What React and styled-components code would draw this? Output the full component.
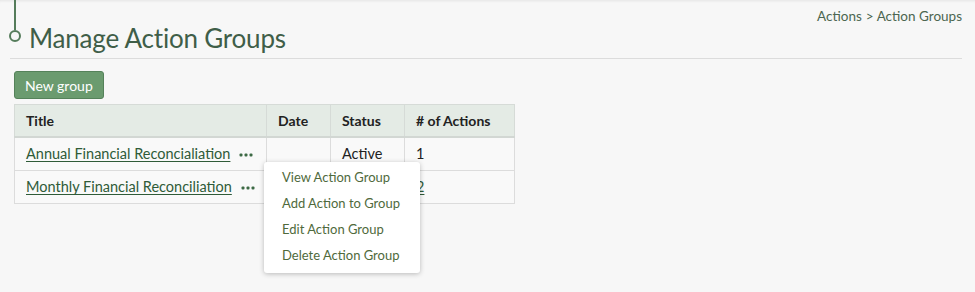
import React from "react";
import styled, { createGlobalStyle } from "styled-components";

const GlobalStyle = createGlobalStyle`
  html, body {
    margin: 0;
    padding: 0;
    background: #f7f7f7;
    font-family: Lato, "Open Sans", sans-serif;
  }
`;

const Page = styled.div`
  width: 975px;
  height: 292px;
  box-sizing: border-box;
  padding: 0 13px 0 14px;
  box-shadow: inset 0 3px 3px -2px rgba(0, 0, 0, 0.08);
`;

const Header = styled.div`
  display: flex;
  justify-content: space-between;
  align-items: flex-start;
  border-bottom: 1px solid #dcdcdc;
  margin-left: -4px;
  height: 59px;
  box-sizing: border-box;
`;

const TitleWrap = styled.div`
  display: flex;
  align-items: flex-start;
`;

const Marker = styled.div`
  display: flex;
  flex-direction: column;
  align-items: center;
  margin-left: -1px;
  width: 12px;
`;

const MarkerLine = styled.div`
  width: 2px;
  height: 30px;
  background: #557c5b;
`;

const MarkerDot = styled.div`
  width: 12px;
  height: 12px;
  box-sizing: border-box;
  border: 2px solid #557c5b;
  border-radius: 50%;
`;

const Title = styled.h1`
  margin: 22px 0 0 8px;
  font-size: 26px;
  font-weight: 400;
  color: #3f5e48;
  line-height: 32px;
  letter-spacing: -0.2px;
`;

const Breadcrumb = styled.div`
  margin-top: 8px;
  font-size: 13.5px;
  color: #4c6650;
  display: flex;
  gap: 4px;
`;

const NewButton = styled.button`
  margin-top: 12px;
  display: block;
  height: 28px;
  padding: 0 10px;
  background: #6b9b6f;
  border: 1px solid #55825a;
  border-radius: 3px;
  color: #fff;
  font-family: inherit;
  font-size: 14px;
`;

const TableWrap = styled.div`
  position: relative;
  margin-top: 5px;
  width: 500px;
`;

const Table = styled.table`
  width: 500px;
  border-collapse: collapse;
  font-size: 14.5px;
  color: #222;
  table-layout: fixed;
`;

const Th = styled.th`
  text-align: left;
  font-weight: 700;
  font-size: 14px;
  background: #e4ebe5;
  border: 1px solid #d6dbd7;
  border-bottom: 2px solid #d2d7d3;
  height: 32px;
  padding: 0 11px;
  width: ${(p) => p.$w}px;
  box-sizing: border-box;
  white-space: nowrap;
`;

const Td = styled.td`
  border: 1px solid #dcdcdc;
  height: 32px;
  padding: 0 11px;
  background: #f9f9f9;
  white-space: nowrap;
`;

const Link = styled.a`
  color: #2f5b38;
  text-decoration: underline;
  text-underline-offset: 2px;
`;

const Dots = styled.svg`
  margin-left: 9px;
  vertical-align: middle;
`;

const Menu = styled.ul`
  position: absolute;
  left: 250px;
  top: 58px;
  width: 156px;
  margin: 0;
  padding: 2px 0 5px;
  list-style: none;
  background: #fff;
  border-radius: 3px;
  box-shadow: 0 1px 5px rgba(0, 0, 0, 0.25);
`;

const MenuItem = styled.li`
  padding: 0 18px;
  height: 26px;
  line-height: 26px;
  font-size: 13px;
  color: #4f6a3c;
  white-space: nowrap;
`;

const rows = [
  { title: "Annual Financial Reconcialiation", status: "Active", count: "1" },
  { title: "Monthly Financial Reconciliation", status: "", count: "2" },
];

const MoreIcon = () => (
  <Dots width="14" height="4" viewBox="0 0 14 4">
    <rect x="0.5" y="0.5" width="3" height="3" rx="1" fill="#3d6a45" />
    <rect x="5.5" y="0.5" width="3" height="3" rx="1" fill="#3d6a45" />
    <rect x="10.5" y="0.5" width="3" height="3" rx="1" fill="#3d6a45" />
  </Dots>
);

export default function App() {
  return (
    <>
      <GlobalStyle />
      <Page>
        <Header>
          <TitleWrap>
            <Marker>
              <MarkerLine />
              <MarkerDot />
            </Marker>
            <Title>Manage Action Groups</Title>
          </TitleWrap>
          <Breadcrumb>
            <span>Actions</span>
            <span>&gt; Action Groups</span>
          </Breadcrumb>
        </Header>
        <NewButton>New group</NewButton>
        <TableWrap>
          <Table>
            <thead>
              <tr>
                <Th $w={252}>Title</Th>
                <Th $w={64}>Date</Th>
                <Th $w={74}>Status</Th>
                <Th $w={110}># of Actions</Th>
              </tr>
            </thead>
            <tbody>
              {rows.map((r) => (
                <tr key={r.title}>
                  <Td>
                    <Link>{r.title}</Link>
                    <MoreIcon />
                  </Td>
                  <Td />
                  <Td>{r.status}</Td>
                  <Td>{r.count === "2" ? <Link>{r.count}</Link> : r.count}</Td>
                </tr>
              ))}
            </tbody>
          </Table>
          <Menu>
            <MenuItem>View Action Group</MenuItem>
            <MenuItem>Add Action to Group</MenuItem>
            <MenuItem>Edit Action Group</MenuItem>
            <MenuItem>Delete Action Group</MenuItem>
          </Menu>
        </TableWrap>
      </Page>
    </>
  );
}
